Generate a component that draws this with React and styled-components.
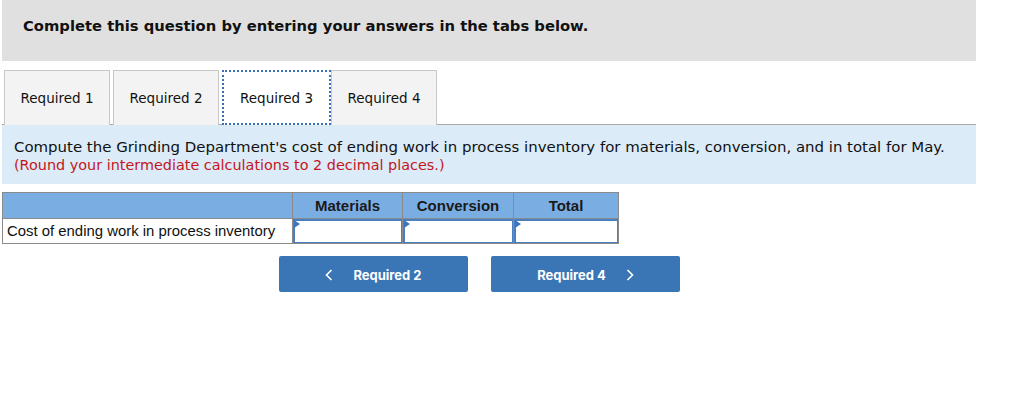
import styled, { createGlobalStyle } from "styled-components";

const GlobalStyle = createGlobalStyle`
  body {
    margin: 0;
    background: #ffffff;
    font-family: "DejaVu Sans", Verdana, sans-serif;
  }
`;

const tabs = ["Required 1", "Required 2", "Required 3", "Required 4"];
const columns = ["Materials", "Conversion", "Total"];

function ChevronIcon({ dir }) {
  return (
    <svg width="8" height="12" viewBox="0 0 8 12">
      <path
        d={dir === "left" ? "M6.5 1 L1.5 6 L6.5 11" : "M1.5 1 L6.5 6 L1.5 11"}
        fill="none"
        stroke="#fff"
        strokeWidth="1.6"
      />
    </svg>
  );
}

function App() {
  return (
    <>
      <GlobalStyle />
      <Page>
        <Banner>Complete this question by entering your answers in the tabs below.</Banner>
        <TabBar>
          {tabs.map((t) => (
            <Tab key={t} active={t === "Required 3"}>{t}</Tab>
          ))}
        </TabBar>
        <Prompt>
          <div>Compute the Grinding Department's cost of ending work in process inventory for materials, conversion, and in total for May.</div>
          <Hint>(Round your intermediate calculations to 2 decimal places.)</Hint>
        </Prompt>
        <Table>
          <thead>
            <tr>
              <HeadCell />
              {columns.map((c) => (
                <HeadCell key={c}>{c}</HeadCell>
              ))}
            </tr>
          </thead>
          <tbody>
            <tr>
              <LabelCell>Cost of ending work in process inventory</LabelCell>
              {columns.map((c) => (
                <InputCell key={c}>
                  <AnswerInput type="text" aria-label={c} />
                </InputCell>
              ))}
            </tr>
          </tbody>
        </Table>
        <NavRow>
          <NavButton>
            <ChevronIcon dir="left" />
            <span>Required 2</span>
          </NavButton>
          <NavButton>
            <span>Required 4</span>
            <ChevronIcon dir="right" />
          </NavButton>
        </NavRow>
      </Page>
    </>
  );
}

const Page = styled.div`
  width: 974px;
  padding-left: 2px;
`;

const Banner = styled.div`
  height: 61px;
  box-sizing: border-box;
  background: #e0e0e0;
  padding: 17px 0 0 21px;
  font-size: 14.75px;
  font-weight: bold;
  color: #111;
`;

const TabBar = styled.div`
  display: flex;
  gap: 3px;
  margin-top: 9px;
  padding-left: 2px;
  border-bottom: 1px solid #a8a8a8;
  height: 54px;
`;

const Tab = styled.div`
  width: ${(p) => (p.active ? "109px" : "106px")};
  box-sizing: border-box;
  height: 55px;
  margin-right: ${(p) => (p.active ? "-3px" : "0")};
  display: flex;
  align-items: center;
  justify-content: center;
  font-size: 13.5px;
  color: #111;
  background: ${(p) => (p.active ? "#ffffff" : "#f3f3f3")};
  border: ${(p) => (p.active ? "2px dotted #3a70b8" : "1px solid #c8c8c8")};
  border-bottom: ${(p) => (p.active ? "2px dotted #3a70b8" : "none")};
  padding-bottom: ${(p) => (p.active ? "0" : "1px")};
  position: relative;
  z-index: ${(p) => (p.active ? 1 : 0)};
`;

const Prompt = styled.div`
  background: #dbebf8;
  height: 59px;
  box-sizing: border-box;
  padding: 13px 0 0 12px;
  font-size: 14.95px;
  line-height: 18px;
  color: #111;
`;

const Hint = styled.div`
  color: #c4161c;
  font-size: 14.4px;
`;

const Table = styled.table`
  margin-top: 8px;
  border-collapse: collapse;
  font-family: "Liberation Sans", Arial, sans-serif;
`;

const HeadCell = styled.th`
  background: #7aaee3;
  border: 1px solid #8a8a8a;
  height: 25px;
  padding: 0;
  font-size: 15px;
  font-weight: bold;
  color: #1a1a1a;
  text-align: center;
  &:nth-child(1) { width: 289px; }
  &:nth-child(2) { width: 109px; }
  &:nth-child(3) { width: 110px; }
  &:nth-child(4) { width: 104px; }
`;

const LabelCell = styled.td`
  border: 1px solid #8a8a8a;
  height: 24px;
  padding: 0 0 0 4px;
  font-size: 14.9px;
  color: #111;
`;

const InputCell = styled.td`
  border: 1px solid #8a8a8a;
  padding: 0;
  height: 24px;
  position: relative;
  &::before {
    content: "";
    position: absolute;
    top: 1px;
    left: 1px;
    border-left: 6px solid #3a75c0;
    border-top: 4px solid transparent;
    border-bottom: 4px solid transparent;
  }
`;

const AnswerInput = styled.input`
  display: block;
  width: 100%;
  height: 24px;
  box-sizing: border-box;
  border: 2px solid #4a7fc1;
  border-right-width: 1px;
  border-bottom-width: 1px;
  outline: none;
  margin: 0;
  padding: 0 4px;
`;

const NavRow = styled.div`
  display: flex;
  gap: 23px;
  margin: 12px 0 0 277px;
`;

const NavButton = styled.button`
  width: 189px;
  height: 36px;
  display: flex;
  align-items: center;
  justify-content: center;
  gap: 20px;
  background: #3a75b6;
  border: none;
  border-radius: 2px;
  color: #fff;
  font-family: Inter, "Open Sans", sans-serif;
  font-size: 13px;
  font-weight: bold;
  padding: 1px 0 0;
`;

export default App;
